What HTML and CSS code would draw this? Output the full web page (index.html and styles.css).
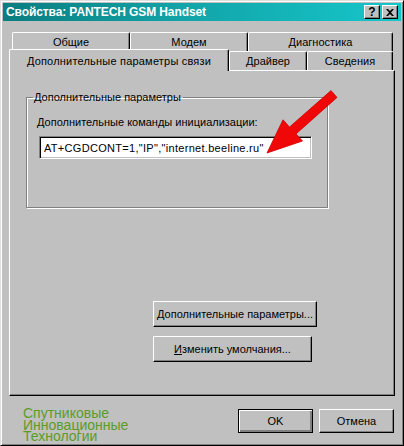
FILE: index.html
```html
<!DOCTYPE html>
<html>
<head>
<meta charset="utf-8">
<link rel="stylesheet" href="styles.css">
</head>
<body>
<div class="window">
  <div class="titlebar">
    <span class="title">Свойства: PANTECH GSM Handset</span>
    <div class="tb-buttons">
      <span class="tbtn help">?</span>
      <span class="tbtn close">
        <svg width="8" height="7" viewBox="0 0 8 7"><path d="M0 0h2l2 2 2-2h2L5 3.5 8 7H6L4 5 2 7H0l3-3.5z" fill="#000"/></svg>
      </span>
    </div>
  </div>
  <div class="content">
    <div class="tabs">
      <div class="tabrow back">
        <div class="tab w1">Общие</div>
        <div class="tab w2">Модем</div>
        <div class="tab w3">Диагностика</div>
      </div>
      <div class="tabrow front">
        <div class="tab selected">Дополнительные параметры связи</div>
        <div class="tab w4">Драйвер</div>
        <div class="tab w5">Сведения</div>
      </div>
    </div>
    <div class="panel">
      <fieldset class="group">
        <legend>Дополнительные параметры</legend>
        <div class="label"><u>Д</u>ополнительные команды инициализации:</div>
        <div class="field">AT+CGDCONT=1,"IP","internet.beeline.ru"</div>
      </fieldset>
      <div class="panel-buttons">
        <div class="btn wide">Дополнительные параметры...</div>
        <div class="btn narrow"><u>И</u>зменить умолчания...</div>
      </div>
    </div>
    <div class="footer">
      <div class="brand">
        <div class="brand-line">Спутниковые</div>
        <div class="brand-line">Инновационные</div>
        <div class="brand-line">Технологии</div>
      </div>
      <div class="footer-buttons">
        <div class="btn dlg default">OK</div>
        <div class="btn dlg">Отмена</div>
      </div>
    </div>
  </div>
  <svg class="arrow" width="404" height="446" viewBox="0 0 404 446">
    <polygon points="330,89.6 336,96.4 295,132.9 301.5,140 266,152 282,118.8 288.5,126.1" fill="#f00808" stroke="#d00000" stroke-width="0.8" stroke-linejoin="round"/>
  </svg>
</div>
</body>
</html>
```

FILE: styles.css
```css
* { box-sizing: border-box; }
html, body { margin: 0; padding: 0; }
body {
  width: 404px;
  height: 446px;
  overflow: hidden;
  font-family: "Liberation Sans", Arial, sans-serif;
  font-size: 11px;
  color: #000;
  background: #c0c0c0;
}
.window {
  position: relative;
  width: 404px;
  height: 446px;
  background: #c0c0c0;
  border: 1px solid;
  border-color: #dfdfdf #000 #000 #dfdfdf;
  box-shadow: inset 1px 1px #fff, inset -1px -1px #808080;
  padding: 2px;
}
.titlebar {
  height: 18px;
  background: linear-gradient(to right, #0b7d80 0%, #12a4a8 45%, #16c6ca 100%);
  display: flex;
  align-items: center;
  justify-content: space-between;
  padding: 0 3px 0 3px;
}
.title {
  color: #fff;
  font-weight: bold;
  font-size: 12px;
  letter-spacing: -0.1px;
}
.tb-buttons { display: flex; gap: 2px; }
.tbtn {
  width: 16px;
  height: 14px;
  background: #c0c0c0;
  border: 1px solid;
  border-color: #fff #000 #000 #fff;
  box-shadow: inset -1px -1px #808080;
  display: flex;
  align-items: center;
  justify-content: center;
  font-weight: bold;
  font-size: 12px;
  line-height: 1;
}
.content { padding: 11px 0 0 0; }
.tabs { display: flex; flex-direction: column; }
.tabrow { display: flex; }
.tabrow.back { padding-left: 9px; height: 17px; }
.tabrow.front { padding-left: 6px; height: 21px; align-items: flex-end; }
.tab {
  background: #c0c0c0;
  border-top: 1px solid #fff;
  border-left: 1px solid #fff;
  border-right: 1px solid #000;
  box-shadow: inset -1px 0 #808080;
  border-radius: 2px 2px 0 0;
  display: flex;
  justify-content: center;
  align-items: flex-start;
  padding-top: 3px;
  height: 19px;
}
.w1 { width: 118px; }
.w2 { width: 118px; }
.w3 { width: 145px; }
.w4 { width: 78px; }
.w5 { width: 86px; }
.tab.selected {
  width: 220px;
  height: 22px;
  margin-bottom: -1px;
  position: relative;
  z-index: 1;
  padding-top: 5px;
  letter-spacing: 0.2px;
}
.panel {
  margin-left: 6px;
  width: 386px;
  height: 326px;
  border: 1px solid;
  border-color: #fff #000 #000 #fff;
  box-shadow: inset -1px -1px #808080;
  padding: 20px 0 0 16px;
  display: flex;
  flex-direction: column;
}
.group {
  margin: 0;
  width: 302px;
  height: 117px;
  border: 1px solid #808080;
  box-shadow: inset 1px 1px #fff, 1px 1px #fff;
  padding: 13px 0 0 10px;
}
.group legend {
  padding: 0 2px 0 1px;
  margin-left: -4px;
}
.label { margin: 0 0 8px 0; }
.field {
  margin-left: 2px;
  width: 273px;
  height: 23px;
  background: #fff;
  border: 1px solid;
  border-color: #808080 #fff #fff #808080;
  box-shadow: inset 1px 1px #000, inset -1px -1px #c0c0c0;
  padding: 5px 0 0 4px;
  white-space: nowrap;
  letter-spacing: 0.3px;
}
.panel-buttons {
  margin: 93px 0 0 127px;
  display: flex;
  flex-direction: column;
  gap: 9px;
}
.btn {
  background: #c0c0c0;
  border: 1px solid;
  border-color: #fff #000 #000 #fff;
  box-shadow: inset -1px -1px #808080;
  display: flex;
  align-items: center;
  justify-content: center;
  white-space: nowrap;
}
.btn.wide { width: 164px; height: 26px; }
.btn.narrow { width: 159px; height: 26px; }
.footer {
  display: flex;
  justify-content: space-between;
  padding: 11px 7px 0 20px;
}
.brand {
  color: #5a9c28;
  font-size: 14px;
  padding-top: 1px;
}
.brand-line {
  height: 11.5px;
  line-height: 11.5px;
}
.footer-buttons { display: flex; gap: 6px; padding-top: 2px; }
.btn.dlg { width: 75px; height: 24px; }
.btn.default {
  border: 1px solid #000;
  box-shadow: inset 1px 1px #fff, inset -1px -1px #808080, inset -2px -2px #808080;
}
.arrow {
  position: absolute;
  left: 0;
  top: 0;
  pointer-events: none;
}
```
